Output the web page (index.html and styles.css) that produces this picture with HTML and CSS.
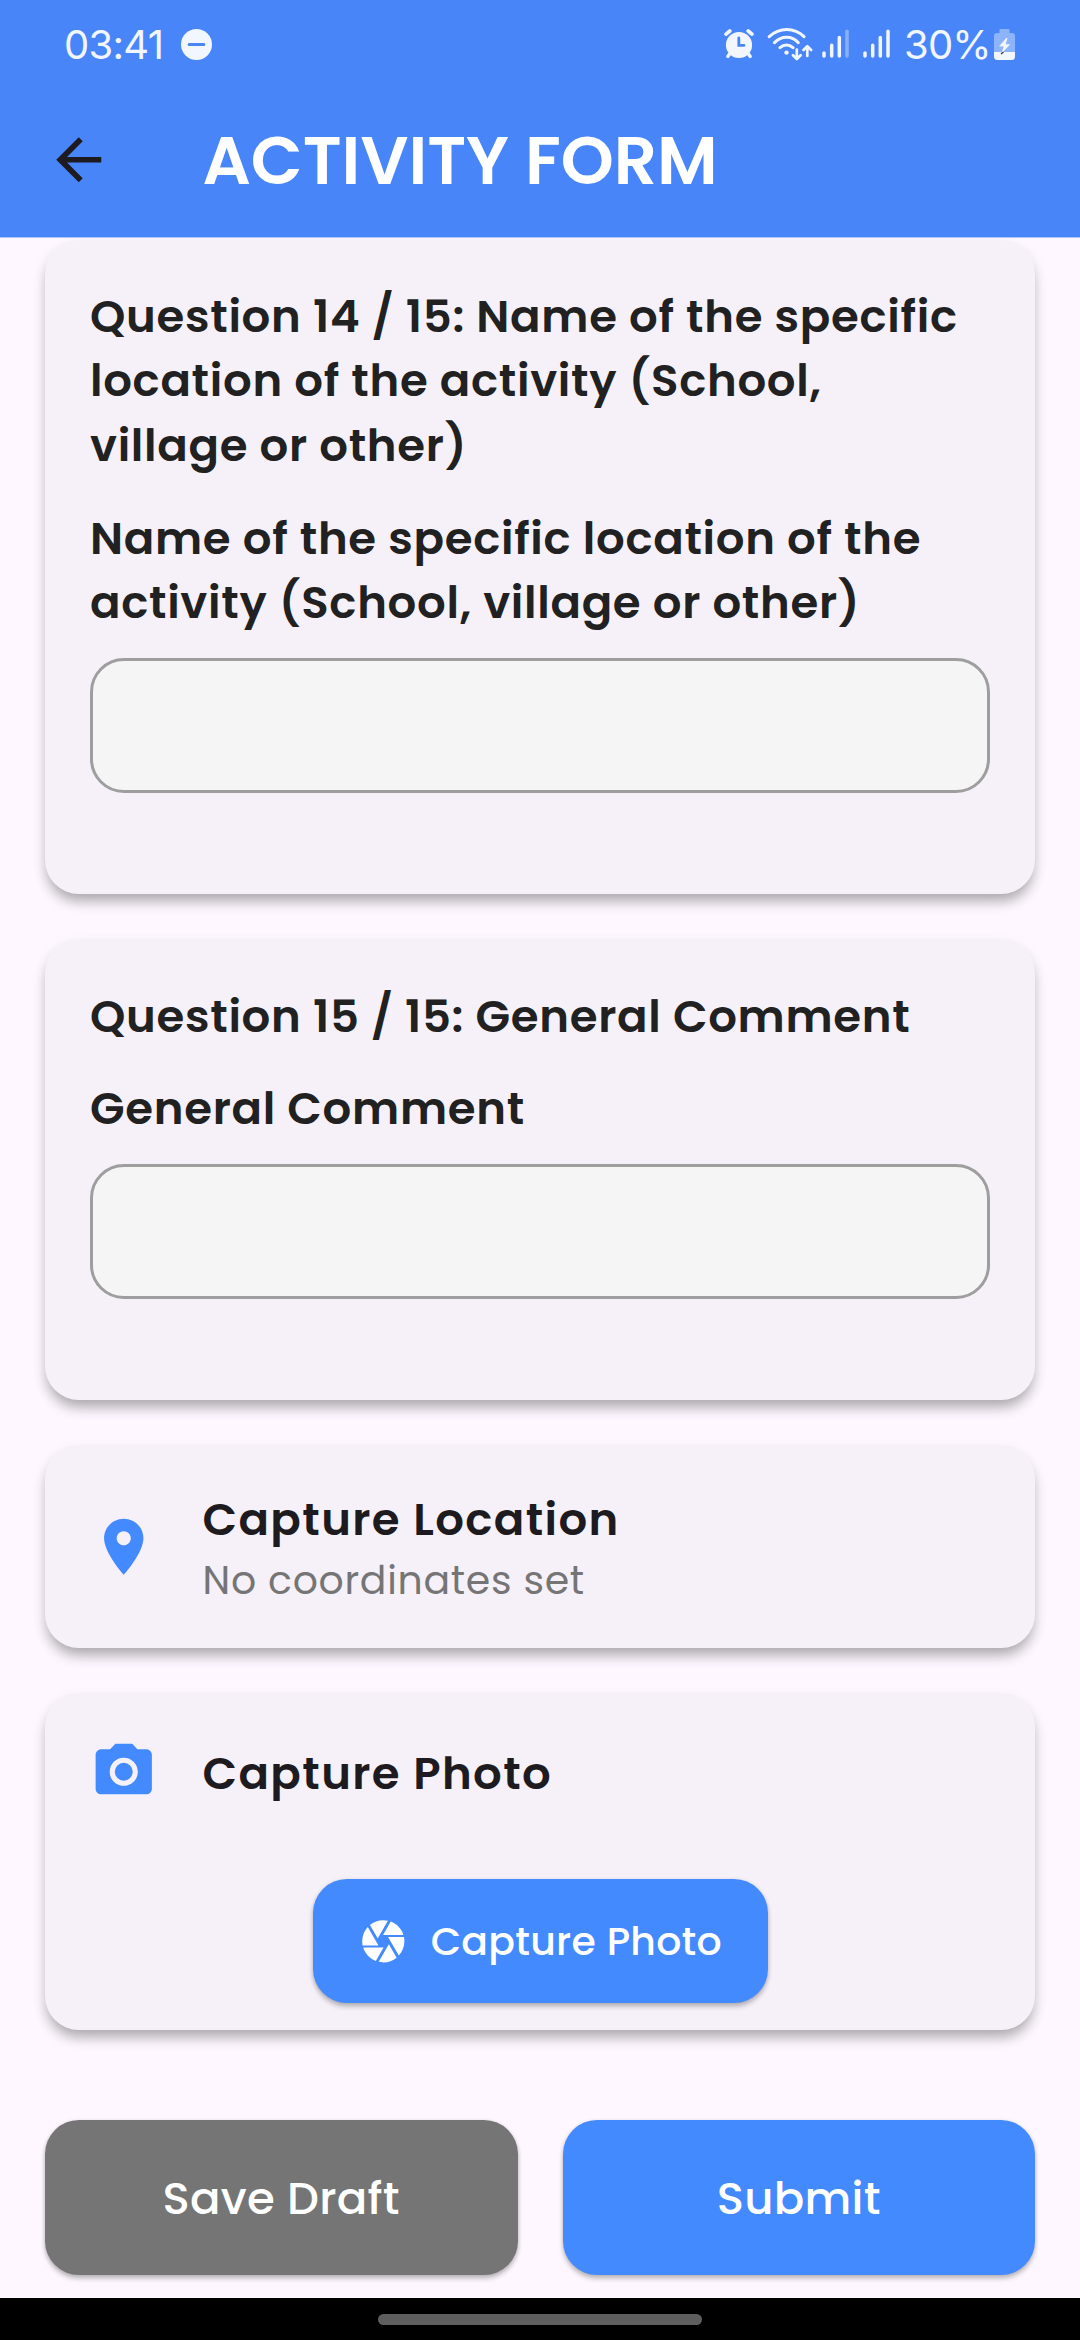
FILE: index.html
```html
<!DOCTYPE html>
<html lang="en">
<head>
<meta charset="utf-8">
<title>Activity Form</title>
<link rel="stylesheet" href="styles.css">
</head>
<body>
<header class="header">
  <div class="status">
    <span class="clock">03:41</span>
    <svg class="dnd" width="31" height="31" viewBox="0 0 31 31"><circle cx="15.5" cy="15.5" r="15.5" fill="#f1f6ff"/><path d="M8.2 15.5h14.6" stroke="#4885f8" stroke-width="3" stroke-linecap="round"/></svg>
    <svg class="alarm" width="30" height="30" viewBox="0 0 30 30" stroke="#f1f6ff" stroke-linecap="round"><circle cx="15" cy="16" r="13.1" fill="#f1f6ff" stroke="none"/><path d="M2 5.2L5.8 2M28 5.2L24.2 2" stroke-width="3.6"/><path d="M6.2 24L3.8 27.4M23.8 24l2.4 3.4" stroke-width="3.4"/><path d="M14.8 9v7.3h5.2" fill="none" stroke="#4885f8" stroke-width="2.8"/></svg>
    <svg class="wifi" width="46" height="34" viewBox="0 0 46 34" fill="none" stroke="#f1f6ff" stroke-width="3.1" stroke-linecap="round" stroke-linejoin="round"><path d="M2.2 9.6C12.5.1 27.3.1 37 9.6M7.5 15.7c7-7.2 17.3-7.2 23.8 0M13 20.7c4-3.6 9-3.6 13 0"/><circle cx="19.5" cy="25.6" r="2.2" fill="#f1f6ff" stroke="none"/><path d="M29.8 22.5v9M26 28.2l3.8 3.8 3.8-3.8M40.3 29v-8.8M36.5 23l3.8-3.9 3.8 3.9" stroke-width="2.7"/></svg>
    <svg class="signal" width="28" height="30" viewBox="0 0 28 30" stroke="#f1f6ff" stroke-width="3.5" stroke-linecap="round"><path d="M2 24v3M9.7 16.2V27M17.3 8.6V27"/><path d="M25 2.3V27" opacity=".38"/></svg>
    <svg class="signal-two" width="28" height="30" viewBox="0 0 28 30" stroke="#f1f6ff" stroke-width="3.5" stroke-linecap="round"><path d="M2 24v3M9.7 16.2V27M17.3 8.6V27M25 2.3V27"/></svg>
    <span class="percent">30%</span>
    <svg class="battery" width="21" height="31" viewBox="0 0 21 31"><path d="M6.5 0h8q1 0 1 1v3H18q3 0 3 3v16H0V7q0-3 3-3h2.500V1q0-1 1-1z" fill="#8db3fb"/><path d="M0 23h21v4.500q0 3.500-3.500 3.500h-14Q0 31 0 27.500z" fill="#f1f6ff"/><path d="M12.2 9L5 17.500h4.700L7 25l9.300-9.700h-4.600L13.500 9z" fill="#f1f6ff"/><path d="M7 25l2.500-2" stroke="#333b4d" stroke-width="1.5"/></svg>
  </div>
  <div class="appbar">
    <svg class="icon" viewBox="0 0 24 24" fill="#1d1b20"><path d="M20 11H7.83l5.59-5.59L12 4l-8 8 8 8 1.41-1.41L7.83 13H20v-2z"/></svg>
    <h1 class="title">ACTIVITY FORM</h1>
  </div>
</header>
<main class="content">
  <section class="card question">
    <div class="label">Question 14 / 15: Name of the specific location of the activity (School, village or other)</div>
    <div class="label">Name of the specific location of the activity (School, village or other)</div>
    <div class="field"></div>
  </section>
  <section class="card question">
    <div class="label">Question 15 / 15: General Comment</div>
    <div class="label">General Comment</div>
    <div class="field"></div>
  </section>
  <section class="card location">
    <svg class="icon" viewBox="0 0 24 24" fill="#448aff"><path d="M12 2C8.13 2 5 5.13 5 9c0 5.25 7 13 7 13s7-7.75 7-13c0-3.87-3.13-7-7-7zm0 9.5c-1.38 0-2.5-1.12-2.5-2.5s1.12-2.5 2.5-2.5 2.5 1.12 2.5 2.5-1.12 2.5-2.5 2.5z"/></svg>
    <div class="tile-text">
      <div class="tile-title">Capture Location</div>
      <div class="tile-sub">No coordinates set</div>
    </div>
  </section>
  <section class="card photo">
    <div class="photo-row">
      <svg class="icon" viewBox="0 0 24 24" fill="#448aff"><circle cx="12" cy="12" r="3.2"/><path d="M9 2L7.17 4H4c-1.1 0-2 .9-2 2v12c0 1.1.9 2 2 2h16c1.1 0 2-.9 2-2V6c0-1.1-.9-2-2-2h-3.17L15 2H9zm3 15c-2.76 0-5-2.24-5-5s2.24-5 5-5 5 2.24 5 5-2.24 5-5 5z"/></svg>
      <div class="tile-title photo-title">Capture Photo</div>
    </div>
    <button class="btn capture">
      <svg class="shutter" viewBox="0 0 24 24" fill="#fff"><path d="M9.4 10.5l4.77-8.26C13.47 2.09 12.75 2 12 2c-2.4 0-4.6.85-6.32 2.25l3.66 6.35.06-.1zM21.54 9c-.92-2.92-3.15-5.26-6-6.34L11.88 9h9.66zm.26 1h-7.49l.29.5 4.76 8.25C21 16.97 22 14.61 22 12c0-.69-.07-1.35-.2-2zM8.54 12l-3.9-6.75C3.01 7.03 2 9.39 2 12c0 .69.07 1.35.2 2h7.49l-1.15-2zm-6.08 3c.92 2.92 3.15 5.26 6 6.34L12.12 15H2.46zm11.27 0l-3.9 6.76c.7.15 1.42.24 2.17.24 2.4 0 4.6-.85 6.32-2.25l-3.66-6.35-.93 1.6z"/></svg>
      <span class="capture-text">Capture Photo</span>
    </button>
  </section>
  <div class="actions">
    <button class="btn save">Save Draft</button>
    <button class="btn submit">Submit</button>
  </div>
</main>
<footer class="navbar"><div class="handle"></div></footer>
</body>
</html>
```
FILE: styles.css
```css
* { box-sizing: border-box; }

body {
  margin: 0;
  width: 1080px;
  height: 2340px;
  overflow: hidden;
  display: flex;
  flex-direction: column;
  background: #fef7ff;
  font-family: Poppins, Inter, "Noto Sans", sans-serif;
}

svg { display: block; flex: none; }

.header {
  flex: none;
  position: relative;
  z-index: 1;
  height: 238px;
  background: #4885f8;
  border-bottom: 1px solid #abc6fc;
}

.status {
  display: flex;
  align-items: center;
  height: 88px;
  padding-left: 64px;
  color: #f1f6ff;
  font-family: Inter, sans-serif;
  font-size: 40px;
}

.clock { width: 117px; letter-spacing: -0.7px; }
.alarm { margin-left: 512px; }
.wifi { margin-left: 13px; }
.signal { margin-left: 9px; }
.signal-two { margin-left: 13px; }
.percent { width: 90px; margin-left: 13px; letter-spacing: -0.8px; }

.appbar {
  display: flex;
  align-items: center;
  gap: 90px;
  height: 144px;
  padding-left: 45px;
}

.icon { width: 67.5px; height: 67.5px; }

.title {
  margin: 2px 0 0;
  color: #fff;
  font-size: 67.5px;
  font-weight: 600;
  line-height: 90px;
}

.content {
  flex: 1;
  display: flex;
  flex-direction: column;
  gap: 45px;
  padding: 1.5px 45px 0;
}

.card {
  flex: none;
  border-radius: 34px;
  background: #f6f1f9;
  box-shadow: 0 10px 13px -3px rgba(0, 0, 0, 0.25), 0 6px 14px rgba(0, 0, 0, 0.1);
}

.question {
  display: flex;
  flex-direction: column;
  padding: 45.3px 45px 101.4px;
}

.label {
  margin-bottom: 28.1px;
  color: #212121;
  font-size: 45px;
  font-weight: 600;
  letter-spacing: 0.7px;
  line-height: 64.6px;
}

.label + .label { margin-bottom: 22.1px; }

.field {
  height: 135px;
  border: 3px solid #9e9e9e;
  border-radius: 34px;
  background: #f5f5f5;
}

.location {
  display: flex;
  align-items: center;
  gap: 45px;
  height: 202.8px;
  padding-left: 45px;
}

.tile-text { padding-top: 1.4px; }

.tile-title {
  color: #1d1b20;
  font-size: 45px;
  font-weight: 600;
  letter-spacing: 1.4px;
  line-height: 67.5px;
}

.photo-title { padding-top: 1.6px; }

.tile-sub {
  color: #757575;
  font-size: 39.4px;
  letter-spacing: 0.7px;
  line-height: 56px;
}

.photo {
  display: flex;
  flex-direction: column;
  align-items: center;
  height: 337.1px;
  padding: 45px 45px 0;
}

.photo-row {
  display: flex;
  align-items: flex-start;
  align-self: stretch;
  gap: 45px;
}

.btn {
  display: flex;
  align-items: center;
  justify-content: center;
  border: 0;
  border-radius: 34px;
  background: #448aff;
  box-shadow: 0 4px 5px rgba(0, 0, 0, 0.2), 0 1px 4px rgba(0, 0, 0, 0.14);
  color: #fff;
  font-family: inherit;
  font-weight: 500;
  letter-spacing: 0.28px;
}

.capture {
  width: 455px;
  height: 124px;
  margin-top: 71.6px;
  padding: 0;
  gap: 22px;
  font-size: 39.4px;
}

.capture-text { padding-top: 1.5px; }

.shutter { width: 50.6px; height: 50.6px; }

.actions {
  display: grid;
  grid-template-columns: 1fr 1fr;
  gap: 45px;
  margin-top: 45px;
}

.save, .submit {
  height: 154.5px;
  padding: 2px 0 0;
  font-size: 45px;
}

.save { background: #757575; }

.navbar {
  flex: none;
  display: flex;
  justify-content: center;
  height: 42px;
  padding-top: 16px;
  background: #000;
}

.handle {
  width: 324px;
  height: 11px;
  border-radius: 6px;
  background: #5e5e5e;
}
```
